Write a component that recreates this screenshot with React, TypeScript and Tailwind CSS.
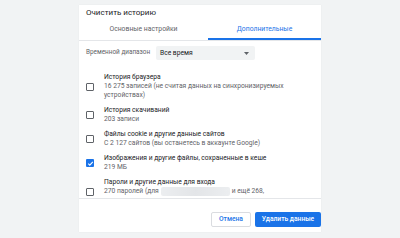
import React from 'react';

type Item = {
  title: string;
  lines: React.ReactNode[];
  checked?: boolean;
  extra?: boolean;
};

const items: Item[] = [
  {
    title: 'История браузера',
    lines: ['16 275 записей (не считая данных на синхронизируемых', 'устройствах)'],
  },
  { title: 'История скачиваний', lines: ['203 записи'] },
  {
    title: 'Файлы cookie и другие данные сайтов',
    lines: ['С 2 127 сайтов (вы останетесь в аккаунте Google)'],
  },
  {
    title: 'Изображения и другие файлы, сохраненные в кеше',
    lines: ['219 МБ'],
    checked: true,
  },
  {
    title: 'Пароли и другие данные для входа',
    lines: [
      <span className="inline-flex items-center">
        270 паролей (для
        <span className="inline-block w-[69px] h-[9px] mx-[2px] rounded-[2px] bg-gradient-to-r from-[#eceef0] via-[#e3e5e8] to-[#eceef0] blur-[0.6px]" />
        и ещё 268,
      </span>,
    ],
    extra: true,
  },
];

const Checkbox: React.FC<{ checked?: boolean }> = ({ checked }) =>
  checked ? (
    <div className="w-[8px] h-[8px] rounded-[1px] bg-[#1a73e8] flex items-center justify-center shrink-0">
      <svg width="7" height="7" viewBox="0 0 10 10">
        <path d="M1.8 5.2 L4 7.3 L8.3 2.8" fill="none" stroke="white" strokeWidth="1.6" />
      </svg>
    </div>
  ) : (
    <div className="w-[8px] h-[8px] rounded-[1px] border border-[#5f6368] shrink-0" />
  );

export default function App() {
  return (
    <div
      className="w-[400px] h-[238px] bg-[#f1f3f4] overflow-hidden pt-[5px] pl-[79px]"
      style={{ fontFamily: 'Roboto, "Noto Sans", sans-serif' }}
    >
      <div className="w-[242px] h-[227px] bg-white flex flex-col shadow-[0_0_1px_rgba(0,0,0,0.08)]">
        {/* Title */}
        <div className="pt-[3px] px-[7px] text-[8px] leading-[10px] text-[#202124]">
          Очистить историю
        </div>

        {/* Tabs */}
        <div className="flex h-[23px] border-b border-[#e4e6e9]">
          <div className="w-[129px] flex items-center justify-center text-[6.8px] text-[#5f6368] pt-[1px]">
            Основные настройки
          </div>
          <div className="flex-1 flex items-center justify-center text-[6.8px] text-[#1a73e8] border-b-2 border-[#1a73e8] pt-[3px]">
            Дополнительные
          </div>
        </div>

        {/* Scroll area */}
        <div className="h-[158px] overflow-hidden border-b border-[#e4e6e9]">
          <div className="flex items-center mt-[5px] px-[7px]">
            <div className="w-[70px] shrink-0 whitespace-nowrap text-[6.4px] text-[#5f6368]">Временной диапазон</div>
            <div className="w-[99px] h-[14px] bg-[#f1f3f4] rounded-[2px] flex items-center justify-between pl-[4px] pr-[6px]">
              <span className="text-[6.7px] text-[#202124]">Все время</span>
              <svg width="5" height="3" viewBox="0 0 5 3">
                <path d="M0 0 L5 0 L2.5 3 Z" fill="#5f6368" />
              </svg>
            </div>
          </div>

          <div className="mt-[10px]">
            {items.map((it, i) => (
              <div key={i} className="flex items-center py-[2.75px] pl-[7px]">
                <Checkbox checked={it.checked} />
                <div className="ml-[10px]">
                  <div className="text-[6.7px] leading-[9.5px] text-[#202124]">{it.title}</div>
                  {it.lines.map((l, j) => (
                    <div key={j} className="text-[6.7px] leading-[9px] text-[#5f6368] whitespace-nowrap">
                      {l}
                    </div>
                  ))}
                  {it.extra && <div className="h-[9px]" />}
                </div>
              </div>
            ))}
          </div>
        </div>

        {/* Footer */}
        <div className="flex justify-end items-start pt-[13px] gap-[4px]">
          <button className="w-[40px] h-[15px] rounded-[2px] border border-[#dadce0] bg-white text-[6.7px] text-[#1a73e8] font-medium">
            Отмена
          </button>
          <button className="w-[66px] h-[15px] rounded-[2px] bg-[#1a73e8] text-[6.7px] text-white font-medium">
            Удалить данные
          </button>
        </div>
      </div>
    </div>
  );
}
